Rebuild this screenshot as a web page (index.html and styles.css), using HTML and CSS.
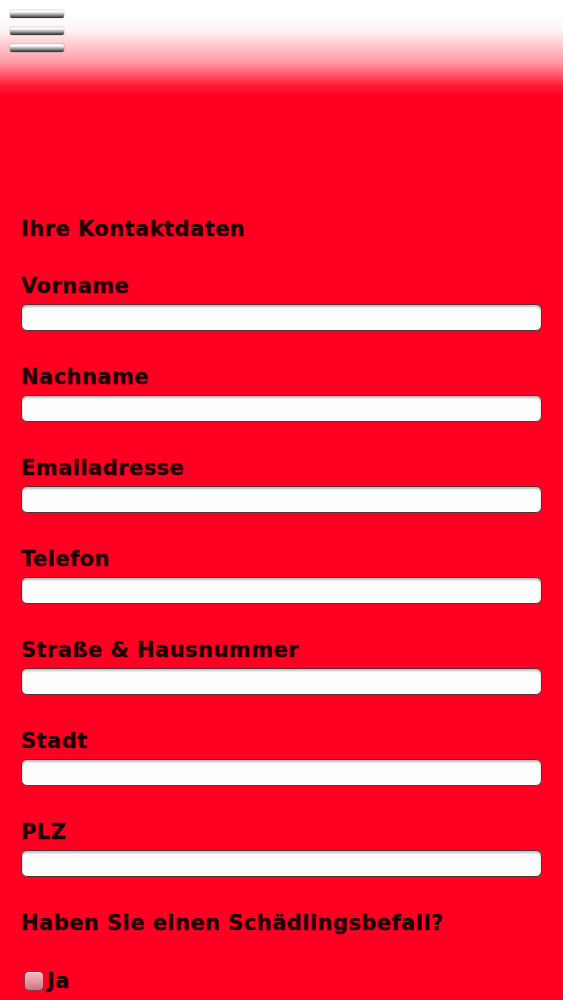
FILE: index.html
```html
<!DOCTYPE html>
<html lang="de">
<head>
<meta charset="utf-8">
<title>Kontakt</title>
<link rel="stylesheet" href="styles.css">
</head>
<body>
<header class="topbar">
  <button class="menu-btn" aria-label="Menü">
    <span class="bar"></span>
    <span class="bar"></span>
    <span class="bar"></span>
  </button>
</header>
<main class="content">
  <form class="contact-form">
    <h2 class="section-title">Ihre Kontaktdaten</h2>
    <div class="field"><label class="label">Vorname</label><input class="input" type="text"></div>
    <div class="field"><label class="label">Nachname</label><input class="input" type="text"></div>
    <div class="field"><label class="label">Emailadresse</label><input class="input" type="email"></div>
    <div class="field"><label class="label">Telefon</label><input class="input" type="tel"></div>
    <div class="field"><label class="label">Straße &amp; Hausnummer</label><input class="input" type="text"></div>
    <div class="field"><label class="label">Stadt</label><input class="input" type="text"></div>
    <div class="field"><label class="label">PLZ</label><input class="input" type="text"></div>
    <h2 class="section-title question">Haben Sie einen Schädlingsbefall?</h2>
    <label class="check-row"><span class="checkbox"></span><span class="check-text">Ja</span></label>
  </form>
</main>
</body>
</html>
```
FILE: styles.css
```css
html, body {
  margin: 0;
  padding: 0;
}
body {
  background: #ff0022;
  font-family: "DejaVu Sans", Verdana, sans-serif;
  color: #1c0004;
  height: 1000px;
  overflow: hidden;
}
.topbar {
  height: 100px;
  background: linear-gradient(to bottom, #ffffff 0px, #ffffff 12px, #fff4f5 30px, #ff9aa6 62px, #ff1a36 86px, #ff0022 96px);
  padding: 10px 0 0 10px;
  box-sizing: border-box;
}
.menu-btn {
  display: flex;
  flex-direction: column;
  gap: 9px;
  padding: 0;
  margin: 0;
  border: 0;
  background: none;
}
.bar {
  display: block;
  width: 54px;
  height: 8px;
  border-radius: 2px;
  background: linear-gradient(to bottom, #f0f0f0 0%, #ffffff 22%, #a8a8a8 55%, #262626 100%);
  box-shadow: 0 0 1px rgba(0,0,0,0.8);
}
.content {
  padding: 117px 21px 0 21px;
}
.contact-form {
  display: flex;
  flex-direction: column;
}
.section-title,
.label,
.check-row {
  font-size: 21px;
  line-height: 24px;
  font-weight: bold;
  letter-spacing: 0.45px;
  -webkit-text-stroke: 0.3px #1c0004;
}
.section-title {
  margin: 0 0 33px 0;
}
.field {
  display: flex;
  flex-direction: column;
  gap: 6px;
  margin-bottom: 34px;
}
.input {
  box-sizing: border-box;
  width: 521px;
  height: 27px;
  margin: 0;
  border: 1px solid #5a3036;
  border-radius: 6px;
  background: #fdfdfd;
  box-shadow: inset 0 2px 2px rgba(0,0,0,0.25);
}
.question {
  margin-bottom: 34px;
}
.check-row {
  display: flex;
  align-items: center;
  gap: 3px;
}
.checkbox {
  display: block;
  width: 20px;
  height: 20px;
  margin-left: 3px;
  box-sizing: border-box;
  border: 1px solid #7a3a44;
  border-radius: 5px;
  background: linear-gradient(to bottom, #f4b6c0 0%, #e89aa6 50%, #cf6f7e 100%);
  box-shadow: inset 0 1px 1px rgba(255,255,255,0.6);
  -webkit-text-stroke: 0;
}
```
